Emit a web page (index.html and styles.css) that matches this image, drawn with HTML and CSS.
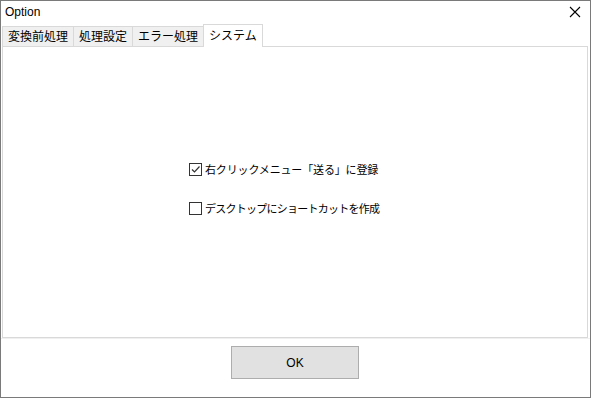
FILE: index.html
```html
<!DOCTYPE html>
<html lang="ja">
  <head>
    <meta charset="UTF-8" />
    <title>Option</title>
    <link rel="stylesheet" href="styles.css">
  </head>
  <body>
    <div class="window">
      <div class="titlebar">
        <span class="title">Option</span>
        <svg class="close" width="12" height="12" viewBox="0 0 12 12">
          <path d="M1 1 L11 11 M11 1 L1 11" stroke="#000" stroke-width="1.1" fill="none" />
        </svg>
      </div>

      <div class="tabs">
        <div class="tab">変換前処理</div>
        <div class="tab">処理設定</div>
        <div class="tab">エラー処理</div>
        <div class="tab active">システム</div>
      </div>

      <div class="panel">
        <label class="check_row">
          <span class="box">
            <svg width="11" height="11" viewBox="0 0 11 11">
              <path d="M2 5.5 L4.5 8 L9.5 2.5" stroke="#333" stroke-width="1.2" fill="none" />
            </svg>
          </span>
          右クリックメニュー「送る」に登録
        </label>
        <label class="check_row tight">
          <span class="box"></span>
          デスクトップにショートカットを作成
        </label>
      </div>

      <div class="footer">
        <button type="button">OK</button>
      </div>
    </div>
  </body>
</html>
```

FILE: styles.css
```css
body {
  margin: 0;
  background-color: white;
  font-family: "Noto Sans CJK JP", "Noto Sans", sans-serif;
  color: black;
}

.window {
  box-sizing: border-box;
  width: 591px;
  height: 398px;
  border: 1px solid rgb(122, 122, 122);
  background-color: white;
  display: flex;
  flex-direction: column;
}

.titlebar {
  height: 24px;
  display: flex;
  align-items: center;
  justify-content: space-between;
  padding: 0 9px 0 4px;
}

.title {
  font-family: "Liberation Sans", Arial, sans-serif;
  font-size: 12px;
  margin-top: -2px;
}

.close {
  margin-top: -2px;
}

.tabs {
  display: flex;
  align-items: flex-end;
  height: 21px;
  margin-left: 1px;
  position: relative;
  z-index: 1;
}

.tab {
  box-sizing: border-box;
  height: 20px;
  padding: 0 5px;
  font-size: 12px;
  line-height: 18px;
  background-color: rgb(240, 240, 240);
  border: 1px solid rgb(217, 217, 217);
  border-bottom: none;
  margin-right: -1px;
}

.tab.active {
  height: 23px;
  margin-bottom: -1px;
  background-color: white;
  line-height: 20px;
  padding: 0 5px;
  border-color: rgb(217, 217, 217);
}

.panel {
  box-sizing: border-box;
  width: 586px;
  height: 292px;
  margin-left: 1px;
  border: 1px solid rgb(217, 217, 217);
  display: flex;
  flex-direction: column;
  gap: 23px;
  padding: 114px 0 0 186px;
}

.check_row {
  display: flex;
  align-items: center;
  gap: 3px;
  font-size: 11px;
  line-height: 16px;
  letter-spacing: -0.15px;
}

.check_row.tight {
  letter-spacing: -0.75px;
}

.box {
  box-sizing: border-box;
  width: 13px;
  height: 13px;
  border: 1px solid rgb(51, 51, 51);
  background-color: white;
  display: flex;
  align-items: center;
  justify-content: center;
}

.footer {
  flex: 1;
  display: flex;
  justify-content: center;
  padding-top: 7px;
  border-top: 1px solid rgb(240, 240, 240);
}

button {
  width: 128px;
  height: 33px;
  margin-left: -1px;
  border: 1px solid rgb(173, 173, 173);
  background-color: rgb(225, 225, 225);
  font-family: "Liberation Sans", Arial, sans-serif;
  font-size: 12px;
  color: black;
  padding: 0;
}
```
